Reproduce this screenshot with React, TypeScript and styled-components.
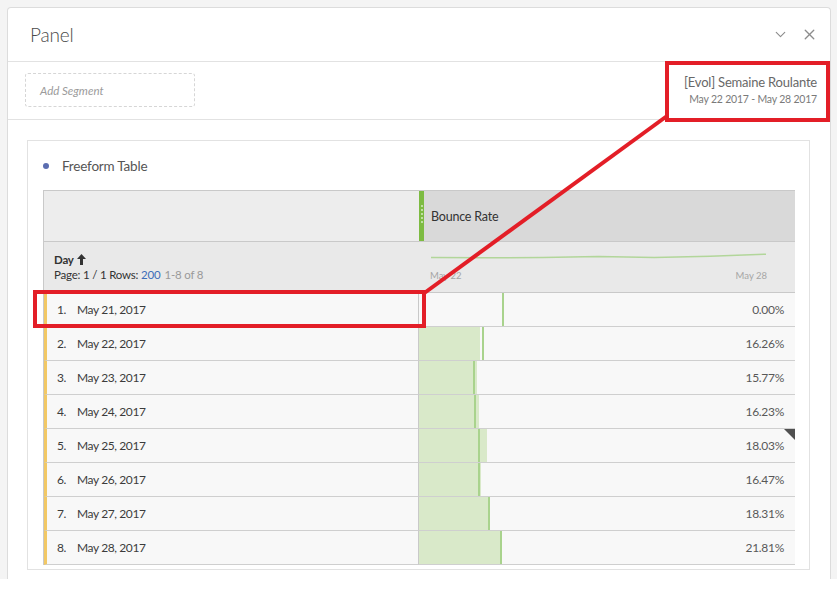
import React from "react";
import styled, { createGlobalStyle } from "styled-components";
import { ChevronDown, X } from "lucide-react";

const GlobalStyle = createGlobalStyle`
  html, body { margin: 0; padding: 0; background: #ffffff; }
  body { font-family: Lato, "Open Sans", sans-serif; color: #4b4b4b; }
  * { box-sizing: border-box; }
`;

const Stage = styled.div`
  position: relative;
  width: 837px;
  height: 614px;
  overflow: hidden;
`;

const Backdrop = styled.div`
  background: #f4f4f4;
  height: 579px;
  padding: 7px 6px 0 7px;
  overflow: hidden;
`;

const Panel = styled.section`
  background: #fff;
  border: 1px solid #dcdcdc;
  border-bottom: none;
  border-radius: 4px 4px 0 0;
  height: 600px;
  display: flex;
  flex-direction: column;
`;

const PanelHeader = styled.header`
  height: 54px;
  display: flex;
  align-items: center;
  justify-content: space-between;
  padding: 0 12px 0 22px;
  border-bottom: 1px solid #e2e2e2;
`;

const PanelTitle = styled.h1`
  margin: 0;
  font-size: 19px;
  font-weight: 300;
  color: #4b4b4b;
  letter-spacing: -0.2px;
`;

const HeaderTools = styled.div`
  display: flex;
  align-items: center;
  gap: 12px;
  color: #8c8c8c;
  margin-top: -1px;
`;

const SegmentBar = styled.div`
  height: 58px;
  display: flex;
  align-items: center;
  justify-content: space-between;
  padding: 0 13px 0 17px;
  border-bottom: 1px solid #e2e2e2;
`;

const AddSegment = styled.div`
  width: 170px;
  height: 34px;
  border: 1px dashed #d6d6d6;
  border-radius: 3px;
  display: flex;
  align-items: center;
  padding-left: 14px;
  font-size: 11.5px;
  font-style: italic;
  color: #9b9b9b;
  margin-top: -1px;
`;

const DateRange = styled.div`
  display: flex;
  flex-direction: column;
  align-items: flex-end;
  gap: 3px;
  margin-top: -3px;
`;

const RangeName = styled.div`
  font-size: 13px;
  color: #686868;
  letter-spacing: -0.2px;
`;

const RangeDates = styled.div`
  font-size: 10.5px;
  color: #7a7a7a;
  letter-spacing: -0.2px;
`;

const PanelBody = styled.div`
  padding: 20px 20px 0 19px;
`;

const Card = styled.div`
  border: 1px solid #e2e2e2;
  padding: 0 14px 4px 15px;
`;

const CardTitle = styled.div`
  height: 49px;
  display: flex;
  align-items: center;
  gap: 13px;
  font-size: 13.5px;
  color: #555;
  letter-spacing: -0.2px;
`;

const Dot = styled.span`
  width: 6px;
  height: 6px;
  border-radius: 50%;
  background: #5b6db0;
`;

const Table = styled.div`
  border: 1px solid #c9c9c9;
  border-bottom: none;
  display: grid;
  grid-template-columns: 375px 1fr;
`;

const HeadLeft = styled.div`
  height: 51px;
  background: #ededed;
  border-bottom: 1px solid #c9c9c9;
`;

const HeadMetric = styled.div`
  height: 51px;
  background: #d9d9d9;
  border-bottom: 1px solid #c9c9c9;
  display: flex;
  align-items: center;
  font-size: 12.5px;
  color: #333;
  letter-spacing: -0.2px;
`;

const Grip = styled.div`
  width: 5px;
  align-self: stretch;
  background: #7dbb42;
  display: flex;
  flex-direction: column;
  align-items: center;
  justify-content: center;
  gap: 2px;
  margin-right: 7px;
  padding-bottom: 4px;
`;

const GripDot = styled.span`
  width: 2px;
  height: 2px;
  border-radius: 50%;
  background: #d6ecc2;
`;

const SubLeft = styled.div`
  height: 51px;
  background: #e9e9e9;
  border-bottom: 1px solid #c9c9c9;
  padding: 11px 0 0 10px;
  font-size: 11.5px;
  color: #333;
  letter-spacing: -0.2px;
`;

const DimName = styled.div`
  font-weight: 700;
  display: flex;
  align-items: center;
  gap: 3px;
  margin-bottom: 2px;
`;

const Muted = styled.span`
  color: #9a9a9a;
  margin-left: 4px;
`;

const Link = styled.span`
  color: #3d6db8;
`;

const SubRight = styled.div`
  height: 51px;
  background: #e9e9e9;
  border-bottom: 1px solid #c9c9c9;
  padding: 6px 28px 0 11px;
  display: flex;
  flex-direction: column;
`;

const Spark = styled.svg`
  width: 337px;
  height: 16px;
  display: block;
`;

const AxisLabels = styled.div`
  display: flex;
  justify-content: space-between;
  font-size: 9.5px;
  color: #a6a6a6;
  margin-top: 6px;
`;

const DimCell = styled.div`
  height: 34px;
  background: #f8f8f8;
  border-left: 3px solid #f2c865;
  border-right: 1px solid #c9c9c9;
  border-bottom: 1px solid #cfcfcf;
  display: flex;
  align-items: center;
  padding-left: 10px;
  font-size: 12px;
  color: #3c3c3c;
  letter-spacing: -0.4px;
`;

const RowNum = styled.span`
  width: 20px;
`;

const MetricCell = styled.div`
  position: relative;
  height: 34px;
  background: #f8f8f8;
  border-bottom: 1px solid #cfcfcf;
  display: flex;
  align-items: center;
  justify-content: flex-end;
  padding-right: 11px;
  font-size: 12px;
  color: #585858;
  letter-spacing: -0.3px;
`;

const BarFill = styled.div`
  position: absolute;
  left: 0;
  top: 0;
  bottom: 0;
  background: #d9e9c9;
`;

const BarMarker = styled.div`
  position: absolute;
  top: 0;
  bottom: 0;
  width: 2px;
  background: #a9d38d;
`;

const CornerFlag = styled.div`
  position: absolute;
  top: 0;
  right: 0;
  width: 0;
  height: 0;
  border-top: 11px solid #505050;
  border-left: 11px solid transparent;
`;

const Value = styled.span`
  position: relative;
`;

const Annotations = styled.svg`
  position: absolute;
  left: 0;
  top: 0;
  pointer-events: none;
`;

const rows = [
  { date: "May 21, 2017", value: "0.00%", fill: 0, marker: 83 },
  { date: "May 22, 2017", value: "16.26%", fill: 61, marker: 63 },
  { date: "May 23, 2017", value: "15.77%", fill: 58, marker: 54 },
  { date: "May 24, 2017", value: "16.23%", fill: 60, marker: 55 },
  { date: "May 25, 2017", value: "18.03%", fill: 68, marker: 59, flag: true },
  { date: "May 26, 2017", value: "16.47%", fill: 62, marker: 59 },
  { date: "May 27, 2017", value: "18.31%", fill: 70, marker: 69 },
  { date: "May 28, 2017", value: "21.81%", fill: 82, marker: 81 },
];

const spark = [16.26, 15.77, 16.23, 18.03, 16.47, 18.31, 21.81];

const sparkPath = spark
  .map((v, i) => {
    const x = (i / (spark.length - 1)) * 335 + 1;
    const y = 10 - (v - 15.5) * 0.6;
    return `${i === 0 ? "M" : "L"}${x.toFixed(1)} ${y.toFixed(1)}`;
  })
  .join(" ");

export default function App() {
  return (
    <Stage>
      <GlobalStyle />
      <Backdrop>
        <Panel>
          <PanelHeader>
            <PanelTitle>Panel</PanelTitle>
            <HeaderTools>
              <ChevronDown size={17} strokeWidth={1.6} />
              <X size={17} strokeWidth={1.9} />
            </HeaderTools>
          </PanelHeader>
          <SegmentBar>
            <AddSegment>Add Segment</AddSegment>
            <DateRange>
              <RangeName>[Evol] Semaine Roulante</RangeName>
              <RangeDates>May 22 2017 - May 28 2017</RangeDates>
            </DateRange>
          </SegmentBar>
          <PanelBody>
            <Card>
              <CardTitle>
                <Dot />
                Freeform Table
              </CardTitle>
              <Table>
                <HeadLeft />
                <HeadMetric>
                  <Grip>
                    {[0, 1, 2, 3, 4].map((i) => (
                      <GripDot key={i} />
                    ))}
                  </Grip>
                  Bounce Rate
                </HeadMetric>
                <SubLeft>
                  <DimName>
                    Day
                    <svg width="9" height="11" viewBox="0 0 9 11">
                      <path d="M4.5 0 L9 5 L6 5 L6 11 L3 11 L3 5 L0 5 Z" fill="#333" />
                    </svg>
                  </DimName>
                  <div>
                    Page: 1 / 1 Rows: <Link>200</Link>
                    <Muted>1-8 of 8</Muted>
                  </div>
                </SubLeft>
                <SubRight>
                  <Spark viewBox="0 0 337 16">
                    <path d={sparkPath} fill="none" stroke="#b2d69a" strokeWidth="1.5" />
                  </Spark>
                  <AxisLabels>
                    <span>May 22</span>
                    <span>May 28</span>
                  </AxisLabels>
                </SubRight>
                {rows.map((r, i) => (
                  <React.Fragment key={r.date}>
                    <DimCell>
                      <RowNum>{i + 1}.</RowNum>
                      {r.date}
                    </DimCell>
                    <MetricCell>
                      <BarFill style={{ width: r.fill }} />
                      <BarMarker style={{ left: r.marker }} />
                      {r.flag && <CornerFlag />}
                      <Value>{r.value}</Value>
                    </MetricCell>
                  </React.Fragment>
                ))}
              </Table>
            </Card>
          </PanelBody>
        </Panel>
      </Backdrop>
      <Annotations width="837" height="614" viewBox="0 0 837 614">
        <rect x="667" y="63" width="161" height="57" fill="none" stroke="#e31e27" strokeWidth="4" />
        <rect x="35" y="292" width="389" height="34" fill="none" stroke="#e31e27" strokeWidth="4" />
        <line x1="667" y1="116" x2="423" y2="294" stroke="#e31e27" strokeWidth="4" />
      </Annotations>
    </Stage>
  );
}
